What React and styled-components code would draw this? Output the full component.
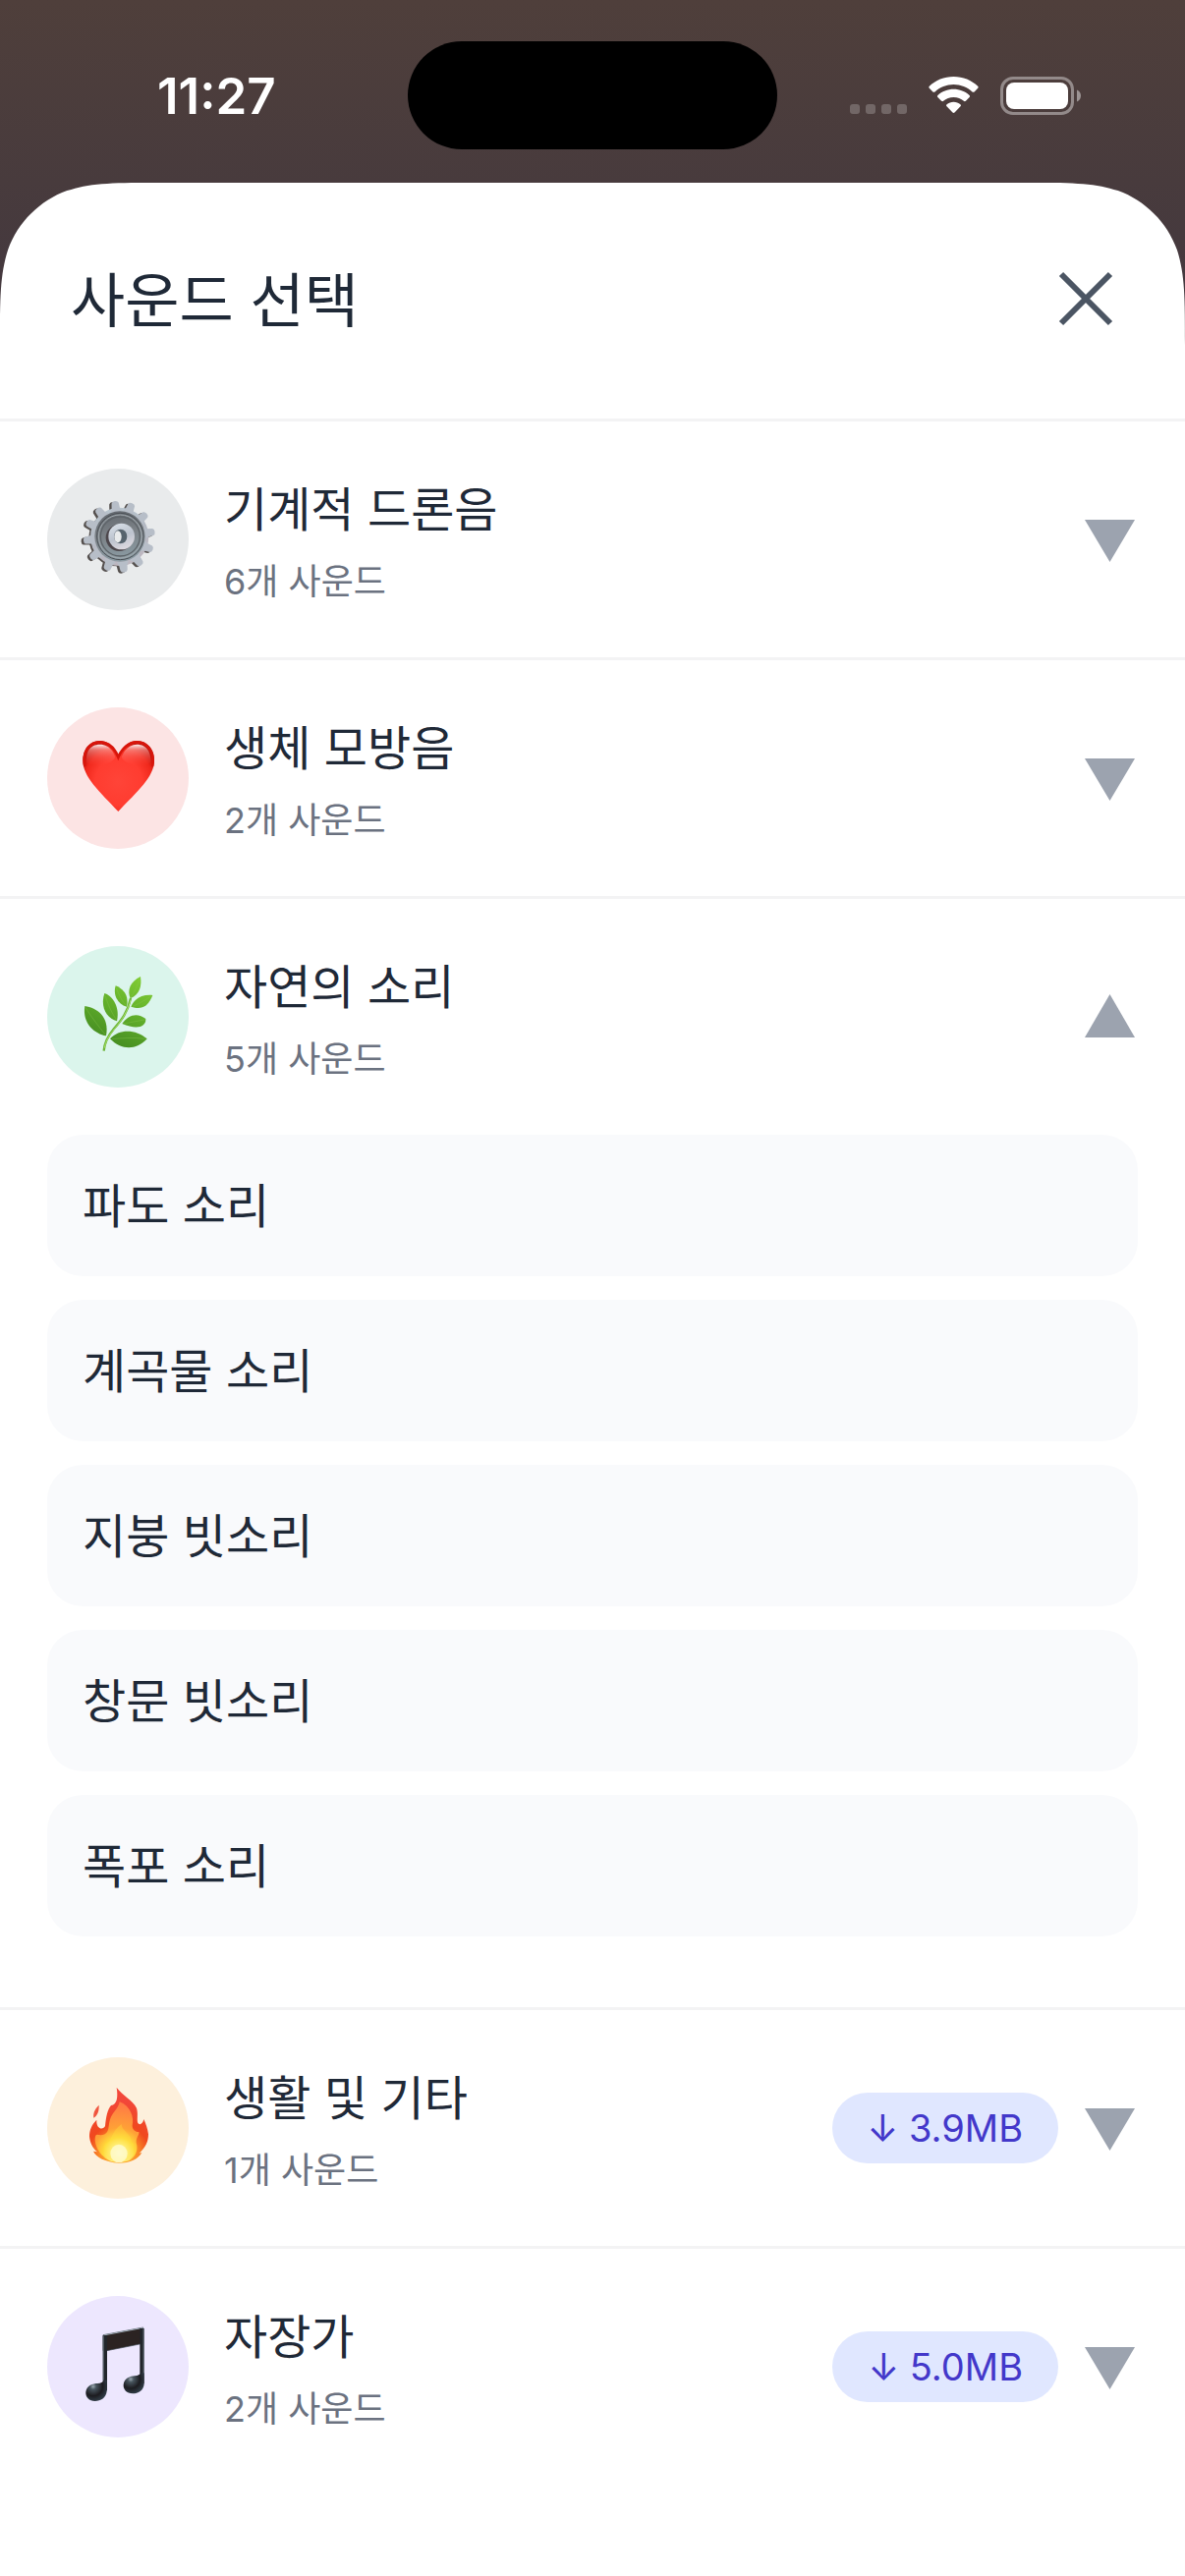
import { useState } from 'react';
import styled, { createGlobalStyle } from 'styled-components';

const GlobalStyle = createGlobalStyle`
*{
    box-sizing:border-box;
}
body{
    margin:0;
    font-family:"Inter", "Noto Sans CJK KR", sans-serif;
    color:#1f2937;
}
button{
    font-family:inherit;
    color:inherit;
    border:none;
    background:none;
    padding:0;
    margin:0;
    cursor:pointer;
}
`;

const Page = styled.div`
display:flex;
flex-direction:column;
min-height:100vh;
background:linear-gradient(#4f3f3b 0px, #483b3d 186px, #42373f 351px);
`;

const StatusBar = styled.div`
display:grid;
grid-template-columns:1fr 376px 1fr;
align-items:center;
padding:42px 0 34px;
`;
const Clock = styled.time`
padding-left:160px;
padding-top:2px;
font-size:51px;
line-height:60px;
font-weight:600;
color:white;
`;
const Island = styled.div`
height:110px;
border-radius:55px;
background:black;
`;
const StatusIcons = styled.div`
display:flex;
justify-content:flex-end;
align-items:center;
gap:22px;
padding-right:106px;
`;

const Sheet = styled.main`
position:relative;
display:flex;
flex-direction:column;
flex:1;
background:white;
`;
const Corner = styled.svg`
position:absolute;
top:0;
${(props) => props.$side}:0;
width:165px;
height:165px;
transform:${(props) => (props.$side === 'right' ? 'scaleX(-1)' : 'none')};
pointer-events:none;
`;
const SheetHeader = styled.header`
display:flex;
align-items:center;
justify-content:space-between;
padding:76px 72px 80px;
border-bottom:3px solid #f3f3f4;
`;
const SheetTitle = styled.h1`
margin:0;
padding-top:4px;
font-size:60px;
line-height:80px;
font-weight:400;
`;
const CloseButton = styled.button`
display:flex;
color:#4b5563;
`;

const Category = styled.section`
border-bottom:3px solid #f3f3f4;
&:last-child{
    border-bottom:none;
}
`;
const CategoryRow = styled.div`
display:flex;
align-items:center;
padding:48px;
`;
const CategoryButton = styled.button`
display:flex;
align-items:center;
flex:1;
gap:36px;
text-align:left;
`;
const IconCircle = styled.span`
display:flex;
width:144px;
height:144px;
border-radius:50%;
background:${(props) => props.$color};
`;
const CategoryInfo = styled.span`
display:flex;
flex-direction:column;
gap:12px;
padding-top:6px;
`;
const CategoryName = styled.span`
font-size:48px;
line-height:68px;
`;
const CategoryCount = styled.span`
font-size:36px;
line-height:54px;
color:#6b7280;
`;
const DownloadButton = styled.button`
height:72px;
padding:0 36px;
margin-right:24px;
border-radius:36px;
background:#e0e7ff;
color:#4338ca;
font-size:38px;
line-height:72px;
`;
const ArrowButton = styled.button`
display:flex;
justify-content:center;
width:57px;
color:#9ca3af;
`;

const SoundList = styled.ul`
display:flex;
flex-direction:column;
gap:24px;
margin:0;
padding:0 48px 72px;
list-style:none;
`;
const SoundItem = styled.button`
display:block;
width:100%;
height:144px;
padding:2px 36px 0;
border-radius:36px;
background:#f9fafc;
font-size:48px;
line-height:142px;
text-align:left;
`;

const SignalIcon = () => (
    <svg width="58" height="38" viewBox="0 0 58 38" fill="white" fillOpacity="0.22" aria-hidden="true">
        {[0, 16, 32, 48].map((x) => <rect key={x} x={x} y="28" width="10" height="10" rx="3" />)}
    </svg>
);

const WifiIcon = () => (
    <svg width="51" height="38" viewBox="0 0 51 38" fill="white" aria-hidden="true">
        <path d="M25.5 0C35.2 0 43.8 3.7 50.2 9.7c.6.6.6 1.5 0 2.1l-3.6 3.6c-.6.6-1.5.6-2.1 0C39.5 10.8 32.8 8 25.5 8S11.5 10.8 6.5 15.4c-.6.6-1.5.6-2.1 0L.8 11.8c-.6-.6-.6-1.5 0-2.1C7.2 3.7 15.8 0 25.5 0z" />
        <path d="M25.5 12.8c6.2 0 11.8 2.3 16.1 6.1.6.6.6 1.5 0 2.1l-3.7 3.7c-.6.6-1.4.6-2 .1-2.8-2.4-6.4-3.9-10.4-3.9s-7.6 1.5-10.4 3.9c-.6.5-1.4.5-2-.1L9.4 21c-.6-.6-.6-1.5 0-2.1 4.3-3.8 9.9-6.1 16.1-6.1z" />
        <path d="M25.5 25.8c2.6 0 5 .9 6.9 2.4.7.5.7 1.5.1 2.1l-6 6.3c-.6.6-1.4.6-2 0l-6-6.3c-.6-.6-.6-1.6.1-2.1 1.9-1.5 4.3-2.4 6.9-2.4z" />
    </svg>
);

const BatteryIcon = () => (
    <svg width="82" height="39" viewBox="0 0 82 39" aria-hidden="true">
        <rect x="1.5" y="1.5" width="72" height="36" rx="11.5" fill="none" stroke="white" strokeOpacity="0.4" strokeWidth="3" />
        <rect x="6" y="6" width="63" height="27" rx="8" fill="white" />
        <path d="M78 13.5c2.4 1 4 3.3 4 6s-1.6 5-4 6z" fill="white" fillOpacity="0.45" />
    </svg>
);

// continuous corner, steeper towards the ends than a plain radius
const SheetCorner = ({ side }) => (
    <Corner $side={side} viewBox="0 0 165 165" aria-hidden="true">
        <defs>
            <linearGradient id={`corner-${side}`} x1="0" y1="0" x2="0" y2="1">
                <stop offset="0" stopColor="#483b3d" />
                <stop offset="1" stopColor="#42373f" />
            </linearGradient>
        </defs>
        <path
            fill={`url(#corner-${side})`}
            d="M0 0H165C117.6 0 93.8 0 72.4 7.1L68.2 8.1C40.3 18.3 18.3 40.3 8.1 68.2C0 93.8 0 117.6 0 165Z"
        />
    </Corner>
);

const CloseIcon = () => (
    <svg width="60" height="60" viewBox="0 0 60 60" stroke="currentColor" strokeWidth="6" aria-hidden="true">
        <path d="M6 5L56 55M56 5L6 55" />
    </svg>
);

const TriangleIcon = ({ up }) => (
    <svg width="51" height="46" viewBox="0 0 51 46" fill="currentColor" aria-hidden="true">
        <path d={up ? 'M0 44H51L25.5 0Z' : 'M0 3H51L25.5 46Z'} />
    </svg>
);

const teeth = [-97, -69, -40, -8, 21, 52, 82, 111, 143, 174, 204, 232];
const toothPath = 'M78 -19L88 -13Q98 -12 106 -11Q112 -9 112 0Q112 9 106 11Q98 12 88 13L78 19Z';

const GearIcon = () => (
    <svg viewBox="54 51 432 432" aria-hidden="true">
        <defs>
            <linearGradient id="gearFace" x1="0" y1="0" x2="0.3" y2="1">
                <stop offset="0" stopColor="#bccbd4" />
                <stop offset="0.5" stopColor="#b3b9c3" />
                <stop offset="1" stopColor="#bdb7c0" />
            </linearGradient>
            <linearGradient id="gearDish" x1="0" y1="0" x2="0.2" y2="1">
                <stop offset="0" stopColor="#60656c" />
                <stop offset="0.5" stopColor="#7b8186" />
                <stop offset="1" stopColor="#8a9aa2" />
            </linearGradient>
            <linearGradient id="gearHub" x1="0" y1="0" x2="0.4" y2="1">
                <stop offset="0" stopColor="#dde4ec" />
                <stop offset="0.6" stopColor="#bcc3ce" />
                <stop offset="1" stopColor="#d9d6dd" />
            </linearGradient>
        </defs>
        <g fill="#55504e">
            <circle cx="267" cy="263" r="86" />
            {teeth.map((angle) => <path key={angle} d={toothPath} transform={`translate(267 262) rotate(${angle}) scale(0.98)`} />)}
        </g>
        <g fill="url(#gearFace)">
            <circle cx="275" cy="259" r="89" />
            {teeth.map((angle) => <path key={angle} fill="#b7bec8" d={toothPath} transform={`translate(274 259) rotate(${angle}) scale(0.98)`} />)}
        </g>
        <circle cx="276" cy="258" r="77" fill="url(#gearDish)" />
        <circle cx="277" cy="258" r="71" fill="none" stroke="#4b5056" strokeWidth="3" />
        <circle cx="277" cy="258" r="66" fill="none" stroke="#a0a8ad" strokeWidth="3" />
        <circle cx="277" cy="258" r="60" fill="none" stroke="#5e6469" strokeWidth="4" />
        <circle cx="274" cy="262" r="41" fill="#4d474c" />
        <circle cx="281" cy="258" r="40" fill="url(#gearHub)" />
        <ellipse cx="278" cy="258" rx="20" ry="22" fill="#56636d" />
        <ellipse cx="270" cy="259" rx="11" ry="18" fill="#e9ebec" />
    </svg>
);

const HeartIcon = () => (
    <svg viewBox="54 60 432 432" aria-hidden="true">
        <defs>
            <radialGradient id="heartBody" cx="0.5" cy="0.58" r="0.6">
                <stop offset="0" stopColor="#ff4438" />
                <stop offset="0.55" stopColor="#ff3c30" />
                <stop offset="0.8" stopColor="#f0281c" />
                <stop offset="1" stopColor="#b80d06" />
            </radialGradient>
            <linearGradient id="heartShine" x1="0" y1="0" x2="0" y2="1">
                <stop offset="0" stopColor="#fff" stopOpacity="0.95" />
                <stop offset="0.25" stopColor="#ffb0ab" stopOpacity="0.6" />
                <stop offset="1" stopColor="#ff4a3f" stopOpacity="0" />
            </linearGradient>
        </defs>
        <path
            fill="url(#heartBody)"
            d="M271 213C262 182 240 162 215 162C184 162 163 187 163 221C163 273 214 316 271 378C329 316 381 273 381 221C381 187 359 162 328 162C303 162 281 182 271 213Z"
        />
        <path
            fill="none"
            stroke="#d8150b"
            strokeWidth="8"
            d="M169 240C160 195 185 166 215 166C240 166 260 184 271 212C283 184 304 166 328 166C358 166 384 195 375 240"
        />
        <path fill="url(#heartShine)" d="M174 228C170 190 190 173 215 173C238 173 254 188 262 212C250 235 200 250 174 228Z" />
        <path fill="url(#heartShine)" d="M370 228C372 190 352 173 328 173C306 173 290 188 281 212C292 235 345 250 370 228Z" />
    </svg>
);

const leaves = [
    ['M169 252C206 257 245 285 234 343C200 338 160 305 169 252Z', 'M172 258C190 287 212 315 232 340'],
    ['M229 213C258 222 276 260 267 298C236 290 215 255 229 213Z', 'M231 220C240 250 253 275 265 294'],
    ['M263 190C289 200 304 222 297 254C270 247 254 218 263 190Z', 'M265 196C273 220 284 238 295 251'],
    ['M339 162C343 190 338 216 308 229C297 203 308 177 339 162Z', 'M337 168C329 190 320 210 310 225'],
    ['M376 219C363 251 345 266 310 254C320 228 345 216 376 219Z', 'M372 221C353 235 332 246 315 253'],
    ['M283 306C302 276 332 272 355 291C356 318 325 324 283 306Z', 'M352 294C330 297 305 303 288 306'],
    ['M246 352C275 320 325 323 359 352C325 389 280 387 246 352Z', 'M353 352C315 347 280 350 252 353'],
];

const HerbIcon = () => (
    <svg viewBox="54 69 432 432" aria-hidden="true">
        <defs>
            <linearGradient id="herbLeaf" gradientUnits="userSpaceOnUse" x1="330" y1="165" x2="230" y2="385">
                <stop offset="0" stopColor="#7fcb33" />
                <stop offset="0.5" stopColor="#5eab29" />
                <stop offset="1" stopColor="#408620" />
            </linearGradient>
        </defs>
        <path fill="none" stroke="#6db53a" strokeWidth="7" d="M227 389C229 362 241 341 258 321C282 294 300 270 309 228" />
        <path fill="none" stroke="#a3dc62" strokeWidth="3" d="M229 380C232 359 244 340 261 320C284 293 300 266 309 234" />
        {leaves.map(([leaf, vein]) => (
            <g key={leaf}>
                <path fill="url(#herbLeaf)" d={leaf} />
                <path fill="none" stroke="#8cc850" strokeWidth="2" strokeOpacity="0.5" d={vein} />
            </g>
        ))}
    </svg>
);

const FireIcon = () => (
    <svg viewBox="54 42 432 432" aria-hidden="true">
        <defs>
            <radialGradient id="fireOuter" gradientUnits="userSpaceOnUse" cx="273" cy="340" r="165">
                <stop offset="0" stopColor="#ffc53a" />
                <stop offset="0.36" stopColor="#f98a26" />
                <stop offset="0.58" stopColor="#f0481e" />
                <stop offset="1" stopColor="#f2473a" />
            </radialGradient>
            <radialGradient id="fireInner" gradientUnits="userSpaceOnUse" cx="273" cy="335" r="150">
                <stop offset="0" stopColor="#fffde0" />
                <stop offset="0.16" stopColor="#fff69a" />
                <stop offset="0.32" stopColor="#ffd93a" />
                <stop offset="0.52" stopColor="#ffa136" />
                <stop offset="1" stopColor="#ff7a45" />
            </radialGradient>
        </defs>
        <path
            fill="url(#fireOuter)"
            d="M266 134C271 165 267 186 249 189C238 203 234 222 231 252C225 265 203 262 205 233C190 248 183 264 183 284C185 302 191 317 207 331L195 329C203 347 232 362 272 365C308 365 333 352 343 333L335 335C354 318 363 300 363 277C361 260 355 245 349 231C346 248 333 251 330 240C328 226 332 214 327 197C315 172 285 160 266 134Z"
        />
        <path fill="#f0553f" d="M212 188C198 201 194 214 196 227C208 219 213 205 212 188Z" />
        <path
            fill="url(#fireInner)"
            d="M275 178C272 200 252 210 246 232C240 250 245 268 230 277C215 283 206 275 202 281C194 302 212 345 250 360C265 364 290 363 305 357C328 343 332 320 326 303C325 286 336 280 334 270C326 272 313 265 314 250C320 225 308 190 275 178Z"
        />
        <path fill="#ffe23f" fillOpacity="0.35" d="M281 246C283 272 315 275 311 303C325 300 321 342 290 360H256C225 343 222 305 238 303C250 298 250 270 281 246Z" />
        <ellipse cx="273" cy="336" rx="26" ry="28" fill="#fffde0" fillOpacity="0.65" />
    </svg>
);

const NoteIcon = () => (
    <svg viewBox="54 51 432 432" aria-hidden="true">
        <defs>
            <radialGradient id="noteHead" cx="0.35" cy="0.3" r="0.75">
                <stop offset="0" stopColor="#9aa7ae" />
                <stop offset="0.2" stopColor="#47545d" />
                <stop offset="0.6" stopColor="#1c1c20" />
                <stop offset="1" stopColor="#34424d" />
            </radialGradient>
        </defs>
        <path fill="#2b2322" stroke="#39454f" strokeWidth="2" d="M225 170L347 147V196L236 218H225Z" />
        <path fill="none" stroke="#9eabb5" strokeWidth="3" d="M226 171L347 148" />
        <path fill="#22262b" d="M224 172H237V340H224ZM337 150H350V318H337Z" />
        <path fill="none" stroke="#71808b" strokeWidth="2" d="M226 173V308M348 151V290" />
        <path fill="url(#noteHead)" d="M236 308V342C234 362 218 372 200 372C182 371 171 360 172 344C174 324 194 318 208 318C218 317 224 314 228 308Z" />
        <path fill="url(#noteHead)" d="M350 286V320C348 340 332 349 315 349C297 348 286 338 287 322C289 302 308 296 322 295C332 294 337 291 341 286Z" />
    </svg>
);

const categories = [
    { id: 'drone', name: '기계적 드론음', count: 6, color: '#e9ebec', Icon: GearIcon, sounds: [] },
    { id: 'body', name: '생체 모방음', count: 2, color: '#fce4e4', Icon: HeartIcon, sounds: [] },
    {
        id: 'nature',
        name: '자연의 소리',
        count: 5,
        color: '#dbf5ec',
        Icon: HerbIcon,
        sounds: ['파도 소리', '계곡물 소리', '지붕 빗소리', '창문 빗소리', '폭포 소리'],
    },
    { id: 'life', name: '생활 및 기타', count: 1, color: '#fdf0dc', Icon: FireIcon, size: '3.9MB', sounds: [] },
    { id: 'lullaby', name: '자장가', count: 2, color: '#ede7fe', Icon: NoteIcon, size: '5.0MB', sounds: [] },
];

const CategoryComponent = (props) => {
    const { category, open, onToggle } = props;
    const { name, count, color, Icon, size, sounds } = category;
    return (
    <Category>
        <CategoryRow>
            <CategoryButton type="button" aria-expanded={open} onClick={onToggle}>
                <IconCircle $color={color}><Icon /></IconCircle>
                <CategoryInfo>
                    <CategoryName>{name}</CategoryName>
                    <CategoryCount>{count}개 사운드</CategoryCount>
                </CategoryInfo>
            </CategoryButton>
            {size && <DownloadButton type="button">↓ {size}</DownloadButton>}
            <ArrowButton type="button" aria-label={name} onClick={onToggle}>
                <TriangleIcon up={open} />
            </ArrowButton>
        </CategoryRow>
        {open && sounds.length > 0 && (
            <SoundList>
                {sounds.map((sound) => (
                    <li key={sound}><SoundItem type="button">{sound}</SoundItem></li>
                ))}
            </SoundList>
        )}
    </Category>
    );
};

const App = () => {
    const [openId, setOpenId] = useState('nature');

    return (
    <Page>
        <GlobalStyle />
        <StatusBar>
            <Clock>11:27</Clock>
            <Island />
            <StatusIcons>
                <SignalIcon />
                <WifiIcon />
                <BatteryIcon />
            </StatusIcons>
        </StatusBar>
        <Sheet>
            <SheetCorner side="left" />
            <SheetCorner side="right" />
            <SheetHeader>
                <SheetTitle>사운드 선택</SheetTitle>
                <CloseButton type="button" aria-label="닫기"><CloseIcon /></CloseButton>
            </SheetHeader>
            <div>
                {categories.map((category) => (
                    <CategoryComponent
                        key={category.id}
                        category={category}
                        open={openId === category.id}
                        onToggle={() => setOpenId(openId === category.id ? null : category.id)}
                    />
                ))}
            </div>
        </Sheet>
    </Page>
    );
};

export default App;
